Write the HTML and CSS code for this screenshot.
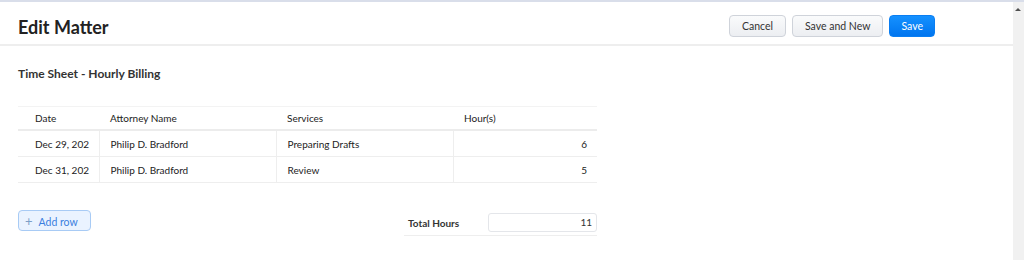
FILE: index.html
```html
<!DOCTYPE html>
<html lang="en">
<head>
    <meta charset="UTF-8">
    <title>Edit Matter</title>
    <link rel="stylesheet" href="styles.css">
</head>
<body>
    <div class="frame">
        <div class="main">
            <div class="header">
                <h1>Edit Matter</h1>
                <div class="actions">
                    <button class="btn">Cancel</button>
                    <button class="btn">Save and New</button>
                    <button class="btn primary">Save</button>
                </div>
            </div>

            <div class="content">
                <h2>Time Sheet - Hourly Billing</h2>

                <table class="sheet">
                    <thead>
                        <tr>
                            <th class="c-date">Date</th>
                            <th class="c-name">Attorney Name</th>
                            <th class="c-svc">Services</th>
                            <th class="c-hrs">Hour(s)</th>
                        </tr>
                    </thead>
                    <tbody>
                        <tr>
                            <td class="c-date">Dec 29, 202</td>
                            <td class="c-name">Philip D. Bradford</td>
                            <td class="c-svc">Preparing Drafts</td>
                            <td class="c-hrs num">6</td>
                        </tr>
                        <tr>
                            <td class="c-date">Dec 31, 202</td>
                            <td class="c-name">Philip D. Bradford</td>
                            <td class="c-svc">Review</td>
                            <td class="c-hrs num">5</td>
                        </tr>
                    </tbody>
                </table>

                <div class="footer-row">
                    <button class="add-row"><span class="plus">+</span>Add row</button>
                    <div class="total">
                        <span class="total-label">Total Hours</span>
                        <div class="total-box">11</div>
                    </div>
                </div>
            </div>
        </div>
        <div class="scrollbar"><span class="arrow"></span></div>
    </div>
</body>
</html>
```

FILE: styles.css
```css
html, body {
    margin: 0;
    padding: 0;
    background: #fff;
}
body {
    font-family: Lato, 'Liberation Sans', sans-serif;
    color: #333;
    border-top: 2px solid #d9deea;
    height: 258px;
    overflow: hidden;
}
.frame {
    display: flex;
    height: 100%;
}
.main {
    flex: 1;
}
.scrollbar {
    width: 11px;
    background: #f1f1f1;
    position: relative;
}
.scrollbar .arrow {
    position: absolute;
    top: 6px;
    left: 2px;
    width: 0;
    height: 0;
    border-left: 3px solid transparent;
    border-right: 3px solid transparent;
    border-bottom: 3px solid #505050;
}
.header {
    display: flex;
    align-items: center;
    justify-content: space-between;
    height: 36px;
    padding: 6px 78px 0 18px;
    border-bottom: 2px solid #eeeeee;
}
.header h1 {
    margin: 2px 0 0 0;
    font-size: 18px;
    line-height: 22px;
    font-weight: 700;
    color: #222;
}
.actions {
    display: flex;
    gap: 6px;
}
.btn {
    font-family: Lato, 'Liberation Sans', sans-serif;
    font-size: 10.5px;
    height: 22px;
    padding: 0 12px;
    color: #333;
    background: linear-gradient(#fafbfc, #eceef2);
    border: 1px solid #cfd3da;
    border-radius: 4px;
}
.btn.primary {
    color: #fff;
    background: linear-gradient(#1591ff, #0075ef);
    border-color: #0a7ef2;
    padding: 0 11px;
}
.content {
    padding: 20px 18px 0 18px;
}
.content h2 {
    margin: 0 0 25px 0;
    font-size: 12px;
    line-height: 15px;
    font-weight: 700;
    color: #333;
}
.sheet {
    width: 579px;
    table-layout: fixed;
    border-collapse: collapse;
    font-size: 10px;
    color: #222;
}
.sheet th,
.sheet td {
    padding: 0;
    line-height: 14px;
}
.sheet th {
    text-align: left;
    font-weight: 400;
    height: 22px;
    border-top: 1px solid #f3f3f3;
    border-bottom: 2px solid #ececec;
}
.sheet td {
    height: 25px;
    border-bottom: 1px solid #eeeeee;
}
.sheet td + td {
    border-left: 1px solid #eeeeee;
}
.sheet .c-date {
    width: 64px;
    padding-left: 17px;
}
.sheet .c-name {
    width: 166px;
    padding-left: 11px;
}
.sheet .c-svc {
    width: 166px;
    padding-left: 11px;
}
.sheet .c-hrs {
    padding-left: 11px;
}
.sheet .num {
    text-align: right;
    padding-right: 10px;
}
.footer-row {
    display: flex;
    justify-content: space-between;
    align-items: flex-start;
    width: 579px;
    margin-top: 27px;
}
.add-row {
    font-family: Lato, 'Liberation Sans', sans-serif;
    font-size: 10.5px;
    color: #3b7fe0;
    background: #eaf3ff;
    border: 1px solid #a8cbf5;
    border-radius: 4px;
    height: 21px;
    padding: 0 12px 0 6px;
}
.add-row .plus {
    color: #7d9fc8;
    font-size: 13px;
    margin-right: 6px;
}
.total {
    display: flex;
    align-items: center;
    width: 189px;
    padding: 3px 0 3px 4px;
    border-bottom: 1px solid #eeeeee;
}
.total-label {
    font-size: 10px;
    font-weight: 700;
    width: 80px;
}
.total-box {
    flex: 1;
    height: 17px;
    line-height: 17px;
    font-size: 10px;
    text-align: right;
    padding-right: 4px;
    border: 1px solid #e4e6ea;
    border-radius: 3px;
}
```
